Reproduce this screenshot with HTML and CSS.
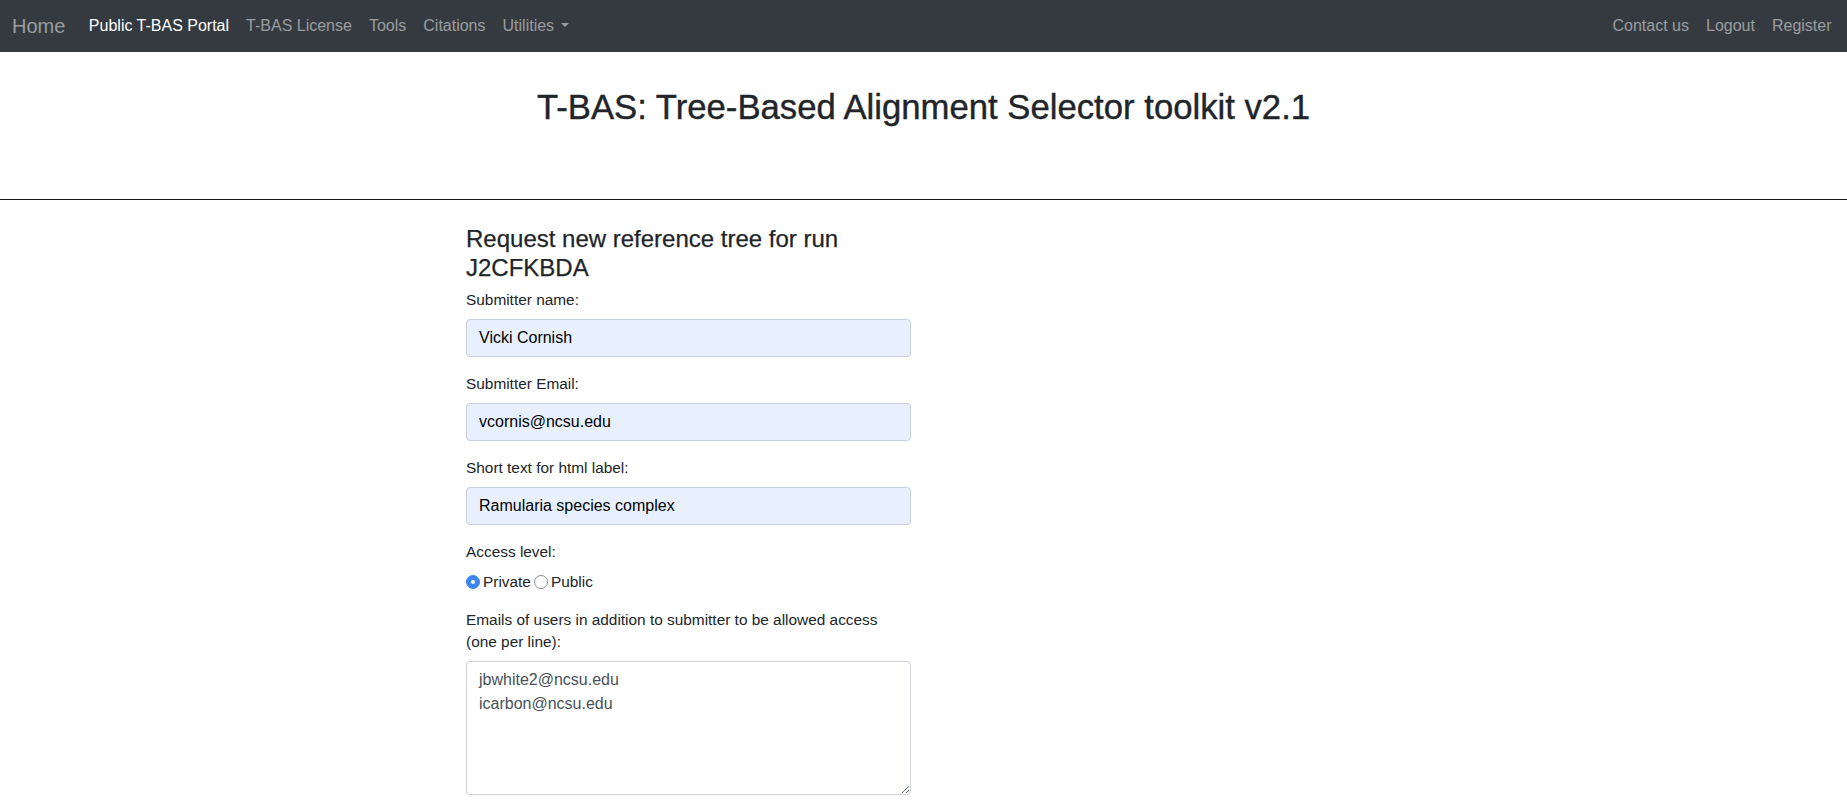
FILE: index.html
```html
<!DOCTYPE html>
<html lang="en">
<head>
<meta charset="utf-8">
<title>T-BAS: Tree-Based Alignment Selector toolkit v2.1</title>
<link rel="stylesheet" href="styles.css">
</head>
<body>
<nav class="navbar">
  <a class="brand" href="#">Home</a>
  <ul class="nav">
    <li><a class="nav-link active" href="#">Public T-BAS Portal</a></li>
    <li><a class="nav-link" href="#">T-BAS License</a></li>
    <li><a class="nav-link" href="#">Tools</a></li>
    <li><a class="nav-link" href="#">Citations</a></li>
    <li><a class="nav-link dropdown-toggle" href="#">Utilities</a></li>
  </ul>
  <ul class="nav nav-right">
    <li><a class="nav-link" href="#">Contact us</a></li>
    <li><a class="nav-link" href="#">Logout</a></li>
    <li><a class="nav-link" href="#">Register</a></li>
  </ul>
</nav>

<header class="page-header">
  <h1 class="page-title">T-BAS: Tree-Based Alignment Selector toolkit v2.1</h1>
</header>
<hr class="divider">

<main class="content">
  <form class="request-form">
    <h4 class="form-title">Request new reference tree for run J2CFKBDA</h4>
    <div class="form-group">
      <label class="form-label" for="name">Submitter name:</label>
      <input class="form-control autofill" id="name" type="text" value="Vicki Cornish">
    </div>
    <div class="form-group">
      <label class="form-label" for="email">Submitter Email:</label>
      <input class="form-control autofill" id="email" type="text" value="vcornis@ncsu.edu">
    </div>
    <div class="form-group">
      <label class="form-label" for="label">Short text for html label:</label>
      <input class="form-control autofill" id="label" type="text" value="Ramularia species complex">
    </div>
    <div class="form-group">
      <div class="form-label">Access level:</div>
      <div class="radio-row">
        <span class="radio checked"></span><span class="radio-text">Private</span>
        <span class="radio"></span><span class="radio-text">Public</span>
      </div>
    </div>
    <div class="form-group">
      <label class="form-label" for="emails">Emails of users in addition to submitter to be allowed access (one per line):</label>
      <textarea class="form-control textarea" id="emails" rows="5">jbwhite2@ncsu.edu
icarbon@ncsu.edu</textarea>
    </div>
  </form>
</main>
</body>
</html>
```
FILE: styles.css
```css
* { box-sizing: border-box; }

html, body {
  margin: 0;
  padding: 0;
}

body {
  font-family: "Liberation Sans", Arial, sans-serif;
  font-size: 16px;
  line-height: 1.5;
  color: #212529;
  background: #fff;
  overflow: hidden;
}

.navbar {
  display: flex;
  align-items: center;
  height: 52px;
  padding: 0 7px 0 12px;
  background: #343a40;
}

.brand {
  font-size: 20px;
  line-height: 30px;
  color: rgba(255, 255, 255, 0.5);
  text-decoration: none;
  margin-right: 15px;
}

.nav {
  display: flex;
  list-style: none;
  margin: 0;
  padding: 0;
}

.nav-right {
  margin-left: auto;
}

.nav-link {
  display: block;
  padding: 8px 8.5px;
  color: rgba(255, 255, 255, 0.5);
  text-decoration: none;
  line-height: 24px;
}

.nav-link.active {
  color: #fff;
}

.dropdown-toggle::after {
  content: "";
  display: inline-block;
  margin-left: 0.45em;
  vertical-align: 0.255em;
  border-top: 0.3em solid;
  border-right: 0.3em solid transparent;
  border-left: 0.3em solid transparent;
  border-bottom: 0;
}

.page-header {
  padding: 34px 0 71px;
  text-align: center;
}

.page-title {
  margin: 0;
  font-size: 34.7px;
  font-weight: 400;
  line-height: 42px;
  color: #212529;
  -webkit-text-stroke: 0.4px #212529;
}

.divider {
  margin: 0;
  border: 0;
  border-top: 1px solid #1a1a1a;
}

.content {
  display: flex;
  justify-content: flex-start;
  padding-top: 25px;
  padding-left: calc(50% - 457.5px);
}

.request-form {
  width: 445px;
}

.form-title {
  margin: 0 0 6px;
  font-size: 24px;
  font-weight: 400;
  line-height: 1.2;
  color: #212529;
  -webkit-text-stroke: 0.25px #212529;
}

.form-group {
  margin-bottom: 16px;
}

.form-label {
  display: block;
  font-size: 15.4px;
  line-height: 22px;
  margin-bottom: 8px;
  color: #212529;
}

.form-control {
  display: block;
  width: 100%;
  height: 38px;
  padding: 6px 12px;
  font-family: "Liberation Sans", Arial, sans-serif;
  font-size: 16px;
  line-height: 24px;
  color: #495057;
  background: #fff;
  border: 1px solid #ced4da;
  border-radius: 4px;
  outline: none;
}

.form-control.autofill {
  background: #e8f0fe;
  color: #000;
  border-color: #c9d1dc;
}

.textarea {
  height: 134px;
  resize: vertical;
}

.radio-row {
  display: flex;
  align-items: center;
  font-size: 15.4px;
  line-height: 22px;
}

.radio {
  display: inline-block;
  width: 14px;
  height: 14px;
  border-radius: 50%;
  border: 1px solid #8e8e8e;
  background: #fff;
  margin-right: 3px;
  position: relative;
}

.radio + .radio-text + .radio {
  margin-left: 3px;
}

.radio.checked {
  background: #3d86f5;
  border-color: #3d86f5;
}

.radio.checked::after {
  content: "";
  position: absolute;
  left: 4px;
  top: 4px;
  width: 4px;
  height: 4px;
  border-radius: 50%;
  background: #fff;
}

.radio-text {
  color: #212529;
}
```
